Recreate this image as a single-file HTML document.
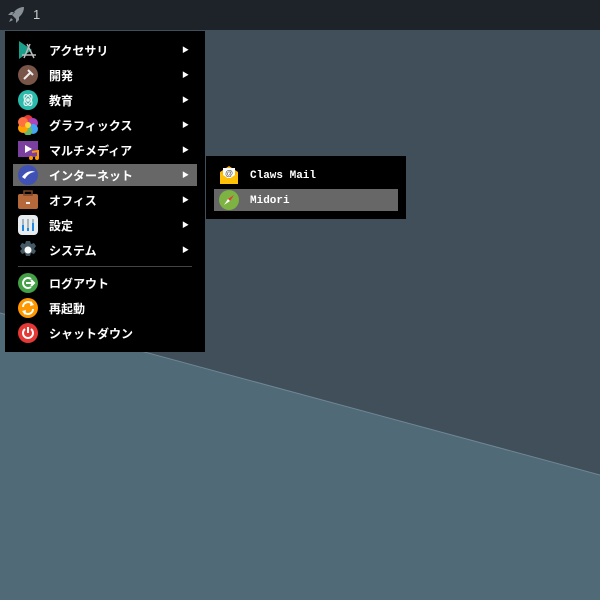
<!DOCTYPE html>
<html><head><meta charset="utf-8"><style>
*{margin:0;padding:0;box-sizing:border-box}
body{width:600px;height:600px;overflow:hidden;position:relative;background:#404f59;font-family:"Liberation Sans","Noto Sans CJK JP",sans-serif}
#bar{position:absolute;left:0;top:0;width:600px;height:30px;background:#1d2328}
#bar .n{position:absolute;left:33px;top:7px;color:#ccc;font-size:13px}
.menu{position:absolute;background:#000}
.it{position:absolute;left:0;height:22px;width:100%;color:#fff;font-size:12px;font-weight:bold;line-height:22px}
.it .t{position:absolute;left:44px;top:1px}
.it .a{position:absolute;left:177px;top:1px;font-size:7px}
.it svg{position:absolute;left:13px;top:1px}
.hl{background:#676767}
.sub .it{font-family:"Liberation Mono","DejaVu Sans Mono",monospace;font-size:11px}
</style></head><body>
<svg width="600" height="600" style="position:absolute;left:0;top:0"><polygon points="0,313 600,475 600,600 0,600" fill="#516a78"/><line x1="0" y1="313" x2="600" y2="475" stroke="#6d8794" stroke-width="1"/></svg>
<div id="bar">
<svg width="20" height="20" style="position:absolute;left:6px;top:5px" viewBox="0 0 20 20"><path d="M18 2 C12 2 8 6 6 10 L10 14 C14 12 18 8 18 2Z M6 10 L2 10 L5 7 L9 7Z M10 14 L10 18 L13 15 L13 11Z M5 13 L3 17 L7 15Z" fill="#8a9196"/></svg>
<span class="n">1</span></div>

<div class="menu" style="left:5px;top:31px;width:200px;height:321px">
<div class="it" style="top:8px"><svg width="22" height="20" viewBox="0 0 22 20"><polygon points="1,1 14,10 1,19" fill="#1aa08a"/><path d="M9 4 L16 18 M12 4 L6 18 M4 15 L18 15" stroke="#bbb" stroke-width="1.5"/></svg><span class="t">アクセサリ</span><span class="a">▶</span></div>
<div class="it" style="top:33px"><svg width="20" height="20"><circle cx="10" cy="10" r="10" fill="#795548"/><path d="M6 14 L13 7 M10 5 L15 10" stroke="#eee" stroke-width="2"/></svg><span class="t">開発</span><span class="a">▶</span></div>
<div class="it" style="top:58px"><svg width="20" height="20"><circle cx="10" cy="10" r="10" fill="#2bbbad"/><ellipse cx="10" cy="10" rx="6" ry="3" fill="none" stroke="#eee" stroke-width="1.2" transform="rotate(60 10 10)"/><ellipse cx="10" cy="10" rx="6" ry="3" fill="none" stroke="#eee" stroke-width="1.2" transform="rotate(-60 10 10)"/><circle cx="10" cy="10" r="1.8" fill="#eee"/></svg><span class="t">教育</span><span class="a">▶</span></div>
<div class="it" style="top:83px"><svg width="20" height="20"><circle cx="10" cy="5" r="5" fill="#e53935"/><circle cx="15" cy="8" r="5" fill="#ab47bc"/><circle cx="15" cy="14" r="5" fill="#42a5f5"/><circle cx="10" cy="16" r="4.5" fill="#66bb6a"/><circle cx="5" cy="13" r="5" fill="#ffa000"/><circle cx="5" cy="7" r="5" fill="#ff7043"/><circle cx="10" cy="10" r="3" fill="#fdd835"/></svg><span class="t">グラフィックス</span><span class="a">▶</span></div>
<div class="it" style="top:108px"><svg width="22" height="20"><rect x="0" y="1" width="20" height="16" fill="#7b3fa0"/><polygon points="7,5 14,9 7,13" fill="#fff"/><path d="M14 12 L20 11 L20 18" stroke="#ff9800" stroke-width="2" fill="none"/><circle cx="13" cy="18" r="2" fill="#ff9800"/><circle cx="19" cy="18" r="2" fill="#ff9800"/></svg><span class="t">マルチメディア</span><span class="a">▶</span></div>
<div class="it hl" style="top:133px;left:8px;width:184px"><svg width="20" height="20" style="left:5px"><circle cx="10" cy="10" r="10" fill="#3f51b5"/><path d="M4 12 C8 6 14 5 17 7 C13 7 9 10 7 14Z" fill="#fff"/></svg><span class="t" style="left:36px">インターネット</span><span class="a" style="left:169px">▶</span></div>
<div class="it" style="top:158px"><svg width="20" height="20"><rect x="0" y="4" width="20" height="15" rx="2" fill="#b5693a"/><rect x="6" y="1" width="8" height="4" fill="none" stroke="#7a4528" stroke-width="1.5"/><rect x="8" y="12" width="4" height="2" fill="#eee"/></svg><span class="t">オフィス</span><span class="a">▶</span></div>
<div class="it" style="top:183px"><svg width="20" height="20"><rect x="0" y="0" width="20" height="20" rx="4" fill="#e9ecef"/><path d="M5 4 V16 M10 4 V16 M15 4 V16" stroke="#90a4ae" stroke-width="1.5"/><path d="M5 10 V16 M10 13 V16 M15 8 V16" stroke="#1e88e5" stroke-width="2"/></svg><span class="t">設定</span><span class="a">▶</span></div>
<div class="it" style="top:208px"><svg width="20" height="20" viewBox="0 0 20 20"><path d="M8 0h4l1 3 3-1 2 3-2 3 2 2-2 3-3-1-1 3h-4l-1-3-3 1-2-3 2-2-2-3 2-3 3 1z" fill="#455a64" transform="translate(0 1)"/><circle cx="10" cy="10" r="3.5" fill="#fff"/></svg><span class="t">システム</span><span class="a">▶</span></div>
<div style="position:absolute;left:13px;top:235px;width:174px;height:1px;background:#444"></div>
<div class="it" style="top:241px"><svg width="20" height="20"><circle cx="10" cy="10" r="10" fill="#43a047"/><path d="M13 6 A5 5 0 1 0 13 14" stroke="#fff" stroke-width="2" fill="none"/><path d="M8 10 H16 M13 7 L16 10 L13 13" stroke="#fff" stroke-width="2" fill="none"/></svg><span class="t">ログアウト</span></div>
<div class="it" style="top:266px"><svg width="20" height="20"><circle cx="10" cy="10" r="10" fill="#ff9800"/><path d="M5 9 A5 5 0 0 1 14 6 M15 11 A5 5 0 0 1 6 14" stroke="#fff" stroke-width="2" fill="none"/><polygon points="13,3 16,7 12,8" fill="#fff"/><polygon points="7,17 4,13 8,12" fill="#fff"/></svg><span class="t">再起動</span></div>
<div class="it" style="top:291px"><svg width="20" height="20"><circle cx="10" cy="10" r="10" fill="#e53935"/><path d="M7 6 A5 5 0 1 0 13 6" stroke="#fff" stroke-width="2" fill="none"/><path d="M10 4 V10" stroke="#fff" stroke-width="2"/></svg><span class="t">シャットダウン</span></div>
</div>

<div class="menu sub" style="left:206px;top:156px;width:200px;height:63px">
<div class="it" style="top:8px"><svg width="20" height="20"><polygon points="1,7 10,1 19,7 19,19 1,19" fill="#ffb300"/><rect x="4" y="3" width="12" height="10" fill="#fff"/><text x="10" y="11" font-size="8" text-anchor="middle" fill="#555" font-family="Liberation Sans">@</text><polygon points="1,8 10,14 19,8 19,19 1,19" fill="#ffc107"/></svg><span class="t">Claws Mail</span></div>
<div class="it hl" style="top:33px;left:8px;width:184px"><svg width="20" height="20" style="left:5px"><circle cx="10" cy="10" r="10" fill="#7cb342"/><polygon points="15,5 11,11 9,9" fill="#e53935"/><polygon points="5,15 9,9 11,11" fill="#fff"/></svg><span class="t" style="left:36px">Midori</span></div>
</div>
</body></html>
